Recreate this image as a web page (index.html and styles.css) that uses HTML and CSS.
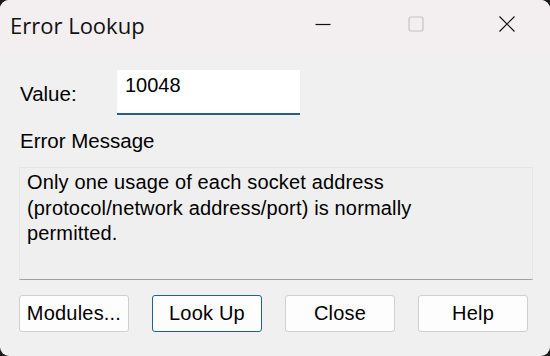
FILE: index.html
```html
<!DOCTYPE html>
<html>
<head>
<meta charset="utf-8">
<link rel="stylesheet" href="styles.css">
</head>
<body>
<div class="window">
  <div class="titlebar">
    <div class="title">Error Lookup</div>
    <div class="controls">
      <div class="ctl min"><svg width="16" height="16" viewBox="0 0 16 16"><path d="M0.5 8.5H15.5" stroke="#111" stroke-width="1.2"/></svg></div>
      <div class="ctl max"><svg width="16" height="16" viewBox="0 0 16 16"><rect x="1" y="1" width="14" height="14" rx="2" fill="none" stroke="#c4c2c3" stroke-width="1.2"/></svg></div>
      <div class="ctl close"><svg width="16" height="16" viewBox="0 0 16 16"><path d="M0.5 0.5L15.5 15.5M15.5 0.5L0.5 15.5" stroke="#111" stroke-width="1.2"/></svg></div>
    </div>
  </div>
  <div class="content">
    <div class="value-row">
      <label class="label">Value:</label>
      <div class="input">10048</div>
    </div>
    <div class="label msg-label">Error Message</div>
    <div class="msgbox">Only one usage of each socket address (protocol/network address/port) is normally permitted.</div>
    <div class="buttons">
      <div class="btn">Modules...</div>
      <div class="btn default">Look Up</div>
      <div class="btn">Close</div>
      <div class="btn">Help</div>
    </div>
  </div>
</div>
</body>
</html>
```
FILE: styles.css
```css
html, body {
  margin: 0;
  padding: 0;
  background: #1a1a1a;
}
body {
  width: 550px;
  height: 356px;
  overflow: hidden;
  font-family: "Liberation Sans", Arial, sans-serif;
  color: #000;
}
.window {
  width: 550px;
  height: 356px;
  border-radius: 9px;
  overflow: hidden;
  background: #f0f0f0;
  display: flex;
  flex-direction: column;
}
.titlebar {
  height: 52px;
  background: #f3eff0;
  display: flex;
  align-items: center;
  justify-content: space-between;
  flex-shrink: 0;
}
.title {
  font-family: "Open Sans", sans-serif;
  font-size: 22px;
  padding-left: 10px;
  color: #111;
  margin-top: -3px;
}
.controls {
  display: flex;
  margin-top: -5px;
  padding-right: 0;
}
.ctl {
  display: flex;
  justify-content: center;
}
.ctl.min { width: 91px; }
.ctl.max { width: 95px; }
.ctl.close { width: 87px; }
.content {
  flex: 1;
  padding: 18px 17px 0 19px;
  display: flex;
  flex-direction: column;
}
.value-row {
  display: flex;
  align-items: center;
  height: 45px;
}
.label {
  font-size: 20.5px;
  padding-left: 1px;
}
.value-row .label {
  width: 97px;
  margin-top: 3px;
}
.input {
  width: 183px;
  background: #fff;
  border-bottom: 2px solid #2a5d8f;
  font-size: 20px;
  padding: 4px 0 0 8px;
  box-sizing: border-box;
  height: 45px;
}
.msg-label {
  margin-top: 14px;
  height: 24px;
}
.msgbox {
  margin-top: 14px;
  height: 113px;
  box-sizing: border-box;
  border-top: 1px solid #e6e6e6;
  border-left: 1px solid #e6e6e6;
  border-right: 1px solid #e6e6e6;
  border-bottom: 1px solid #a0a0a0;
  background: #efefef;
  padding: 2px 60px 3px 7px;
  font-size: 20px;
  letter-spacing: 0.15px;
  line-height: 25.5px;
}
.buttons {
  margin-top: 15px;
  display: flex;
  gap: 23px;
}
.btn {
  width: 110px;
  height: 37px;
  box-sizing: border-box;
  background: #fdfdfd;
  border: 1px solid #d0d0d0;
  border-radius: 3px;
  display: flex;
  align-items: center;
  justify-content: center;
  font-size: 20px;
  letter-spacing: 0.2px;
}
.btn.default {
  border-color: #1e5f99;
}
```
